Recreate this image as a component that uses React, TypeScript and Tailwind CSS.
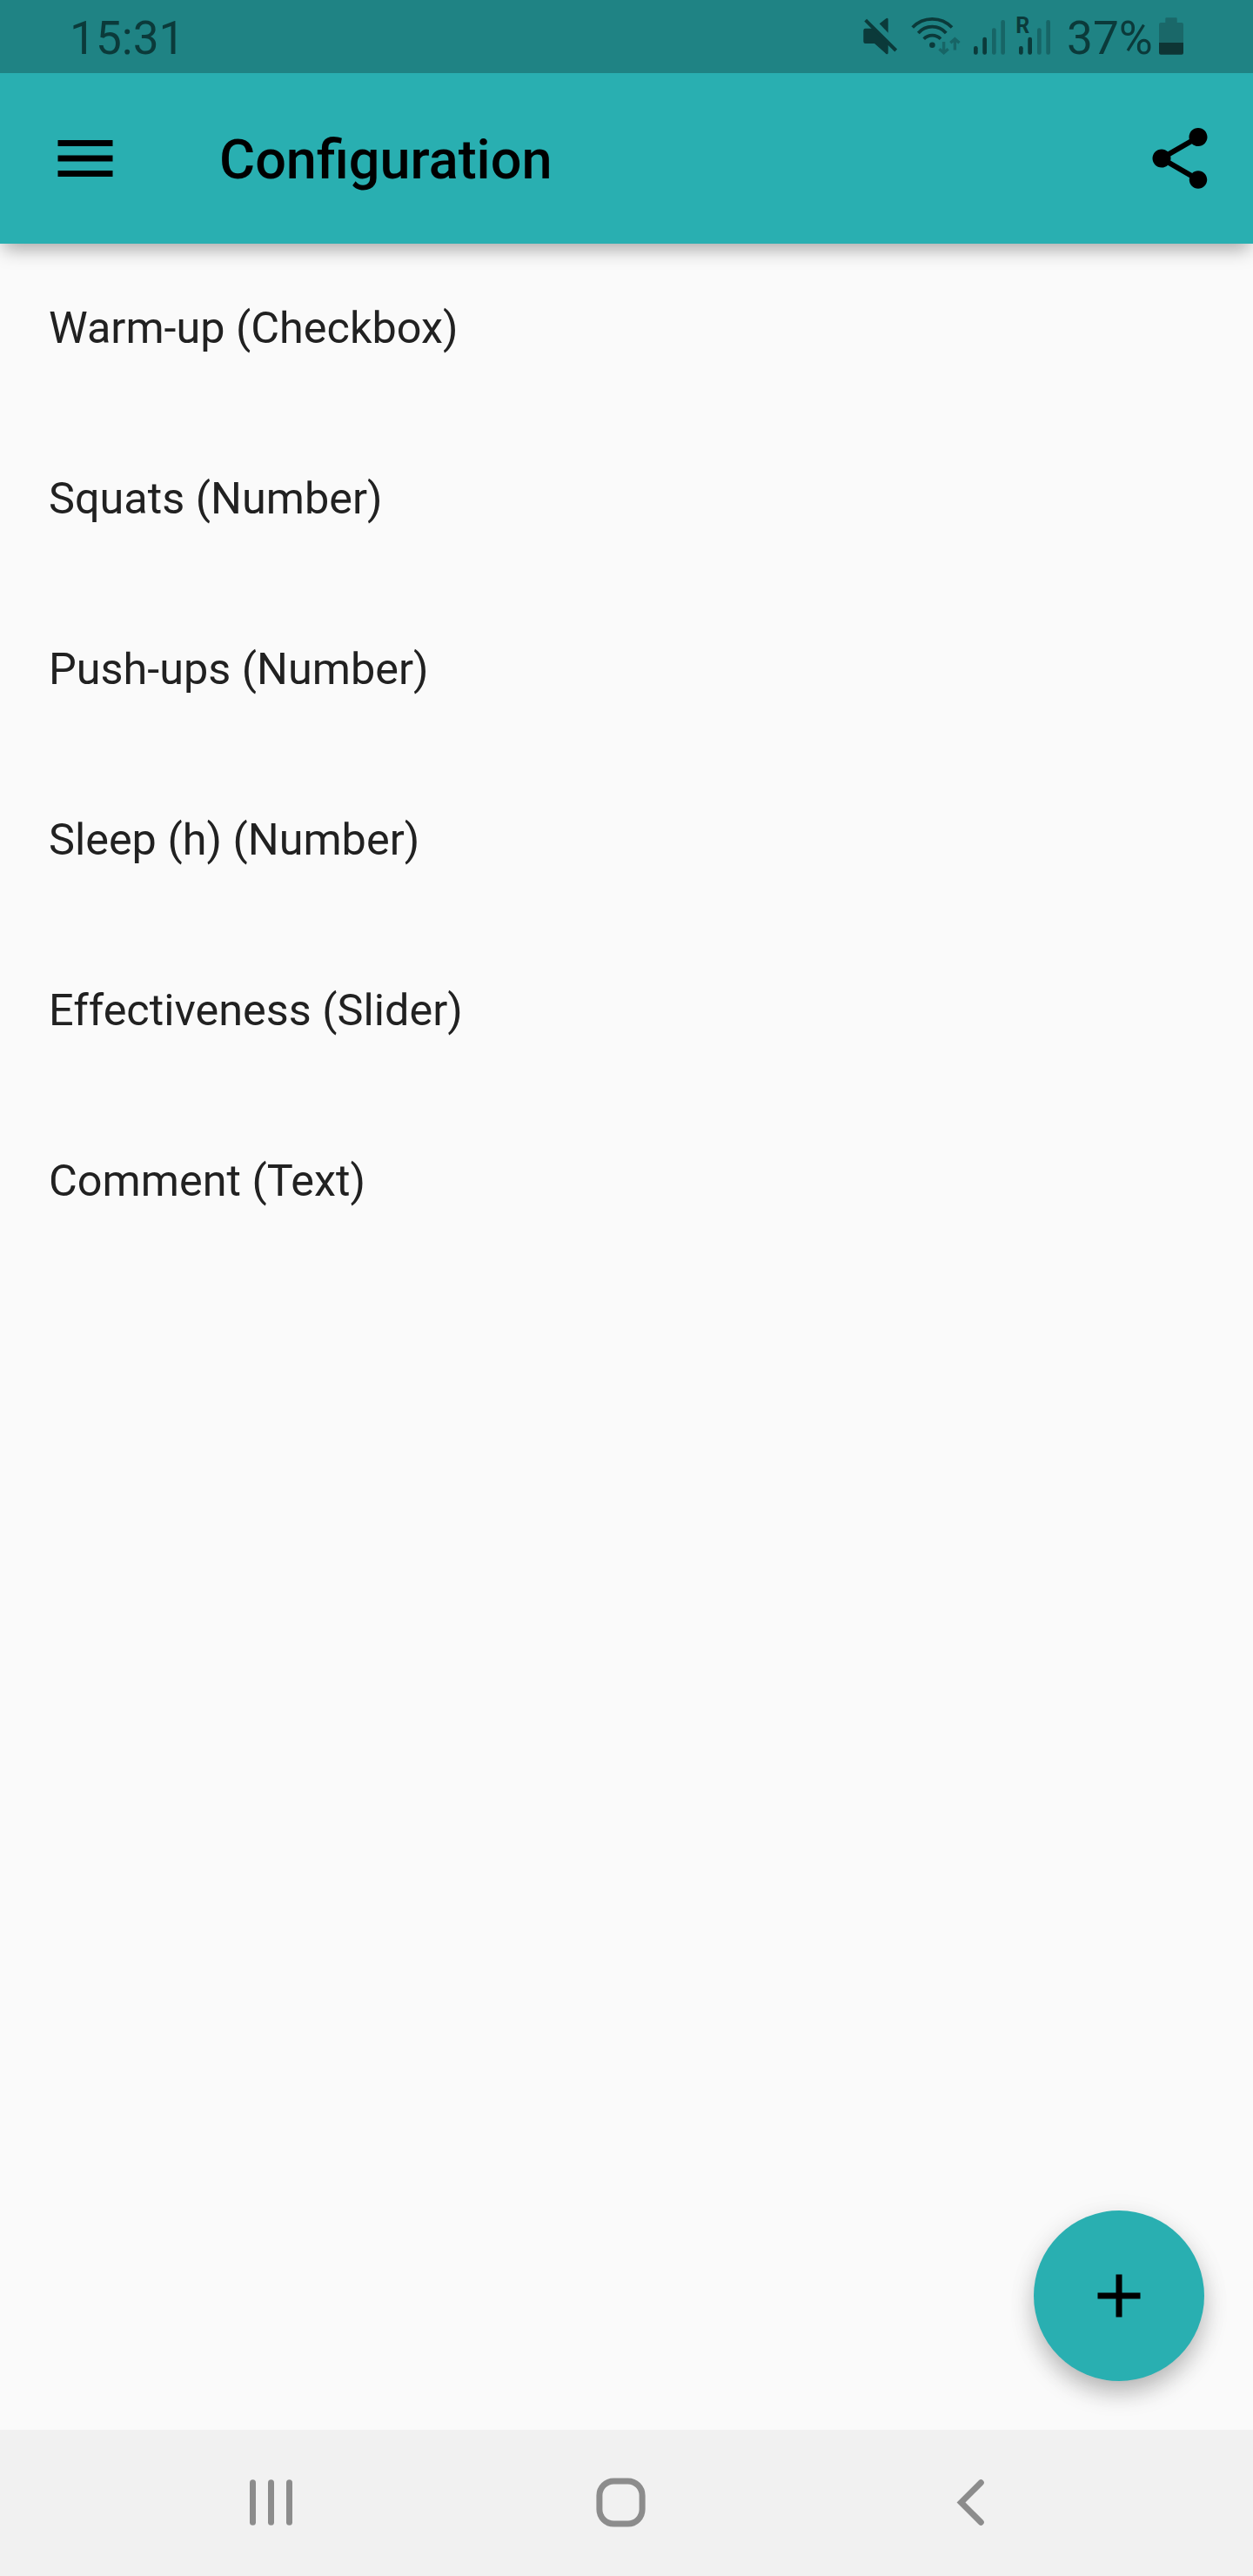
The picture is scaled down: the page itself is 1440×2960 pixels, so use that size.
const rows = [
  'Warm-up (Checkbox)',
  'Squats (Number)',
  'Push-ups (Number)',
  'Sleep (h) (Number)',
  'Effectiveness (Slider)',
  'Comment (Text)',
];

function StatusBar() {
  return (
    <div className="relative z-10 flex h-[84px] shrink-0 items-center bg-[#1f8384] text-[#0b3a3a]">
      <span className="ml-20 pt-1 text-[53.2px] leading-[84px]">15:31</span>
      <svg className="ml-auto h-[84px] w-[236px]" viewBox="990 0 236 84" fill="currentColor">
        <path d="M994.5 32.7H1003L1020.7 50.4V60.5Q1020.7 63 1018.4 61.9L1005 50H994.5Q992.3 50 992.3 47.8V34.9Q992.3 32.7 994.5 32.7Z" />
        <path d="M1010.7 27.3L1018.4 21.2Q1020.7 20 1020.7 22.5V37.7Z" />
        <path d="M994.7 23.2L1029.7 58" stroke="currentColor" strokeWidth="4" />
        <path
          d="M1048.7 31.5A31.3 31.3 0 0 1 1094 31.5M1055.3 38A21 21 0 0 1 1087.3 38M1061.7 44.7A13.5 13.5 0 0 1 1081 44.7"
          fill="none"
          stroke="currentColor"
          strokeWidth="3.7"
        />
        <circle cx="1071.4" cy="51.7" r="3.3" />
        <path
          d="M1084.6 48V60M1079.5 56.2L1084.6 60.7L1089.7 56.2M1097.4 57.5V45.5M1092.3 49.3L1097.4 44.8L1102.5 49.3"
          fill="none"
          stroke="#176566"
          strokeWidth="3.4"
        />
        <rect x="1119" y="53" width="4.7" height="9.7" rx="2.2" />
        <rect x="1129.3" y="42.7" width="4.7" height="20" rx="2.2" />
        <rect x="1140" y="32.3" width="4.7" height="30.4" rx="2.2" fill="#176566" />
        <rect x="1150.3" y="23" width="4.7" height="39.7" rx="2.2" fill="#176566" />
        <text x="1167.2" y="38" className="text-[25px] font-bold">R</text>
        <rect x="1171" y="53" width="4.7" height="9.7" rx="2.2" />
        <rect x="1181.3" y="42.7" width="4.7" height="20" rx="2.2" />
        <rect x="1192" y="32.3" width="4.7" height="30.4" rx="2.2" fill="#176566" />
        <rect x="1202.3" y="23" width="4.7" height="39.7" rx="2.2" fill="#176566" />
      </svg>
      <span className="w-[102px] pt-1 text-[53.2px] leading-[84px]">37%</span>
      <svg className="mr-20 h-[84px] w-8" viewBox="1328 0 32 84">
        <path d="M1339.3 26V21.5Q1339.3 20.3 1340.5 20.3H1351.5Q1352.7 20.3 1352.7 21.5V26H1358Q1360 26 1360 28V49H1332V28Q1332 26 1334 26Z" fill="#1a6869" />
        <path d="M1332 49H1360V60.7Q1360 62.7 1358 62.7H1334Q1332 62.7 1332 60.7Z" fill="#0e3535" />
      </svg>
    </div>
  );
}

function AppBar() {
  return (
    <header className="flex h-[196px] shrink-0 items-center bg-[#29afb1] text-black shadow-[0_10px_20px_-4px_rgba(0,0,0,0.34)]">
      <button className="ml-14" aria-label="Menu">
        <svg className="size-[84px]" viewBox="0 0 24 24" fill="currentColor">
          <path d="M3 18h18v-2H3v2zm0-5h18v-2H3v2zm0-7v2h18V6H3z" />
        </svg>
      </button>
      <h1 className="ml-28 pt-1 text-[63px] font-medium">Configuration</h1>
      <button className="mr-[42px] ml-auto" aria-label="Share">
        <svg className="size-[84px]" viewBox="0 0 24 24" fill="currentColor">
          <path d="M18 16.08c-.76 0-1.44.3-1.96.77L8.91 12.7c.05-.23.09-.46.09-.7s-.04-.47-.09-.7l7.05-4.11c.54.5 1.25.81 2.04.81 1.66 0 3-1.34 3-3s-1.34-3-3-3-3 1.34-3 3c0 .24.04.47.09.7L8.04 9.81C7.5 9.31 6.79 9 6 9c-1.66 0-3 1.34-3 3s1.34 3 3 3c.79 0 1.5-.31 2.04-.81l7.12 4.16c-.05.21-.08.43-.08.65 0 1.61 1.31 2.92 2.92 2.92s2.92-1.31 2.92-2.92-1.31-2.92-2.92-2.92z" />
        </svg>
      </button>
    </header>
  );
}

function NavBar() {
  return (
    <nav className="flex h-[168px] shrink-0 items-center bg-[#f1f1f1] pb-px pl-[110.5px] text-[#8c8c8c]">
      <div className="flex w-[402px] justify-center">
        <svg className="size-[57px]" viewBox="0 0 57 57" fill="currentColor">
          <rect x="4" y="2.2" width="7" height="52.6" rx="3.5" />
          <rect x="25" y="2.2" width="7" height="52.6" rx="3.5" />
          <rect x="46" y="2.2" width="7" height="52.6" rx="3.5" />
        </svg>
      </div>
      <div className="flex w-[402px] justify-center">
        <svg className="size-[57px]" viewBox="0 0 57 57" fill="none" stroke="currentColor" strokeWidth="7">
          <rect x="3.9" y="3.9" width="49.2" height="49.2" rx="16.5" />
        </svg>
      </div>
      <div className="flex w-[402px] justify-center">
        <svg className="size-[57px]" viewBox="0 0 57 57" fill="none" stroke="currentColor" strokeWidth="7" strokeLinecap="round">
          <path d="M40.3 5.7L17.5 28.5L40.3 51.3" />
        </svg>
      </div>
    </nav>
  );
}

export default function App() {
  return (
    <div className="relative flex h-[2960px] w-[1440px] flex-col overflow-hidden bg-[#fafafa] font-['Roboto',sans-serif]">
      <StatusBar />
      <AppBar />
      <main className="flex-1">
        {rows.map((label) => (
          <div key={label} className="flex h-[196px] items-center pb-0.5 pl-14 text-[50.4px] text-[#212121]">
            {label}
          </div>
        ))}
      </main>
      <button
        aria-label="Add"
        className="absolute right-14 bottom-56 flex size-[196px] items-center justify-center rounded-full bg-[#29afb1] text-black shadow-[0_14px_28px_-2px_rgba(0,0,0,0.26),0_6px_36px_rgba(0,0,0,0.06)]"
      >
        <svg className="size-[84px]" viewBox="0 0 24 24" fill="currentColor">
          <path d="M19 13h-6v6h-2v-6H5v-2h6V5h2v6h6v2z" />
        </svg>
      </button>
      <NavBar />
    </div>
  );
}
